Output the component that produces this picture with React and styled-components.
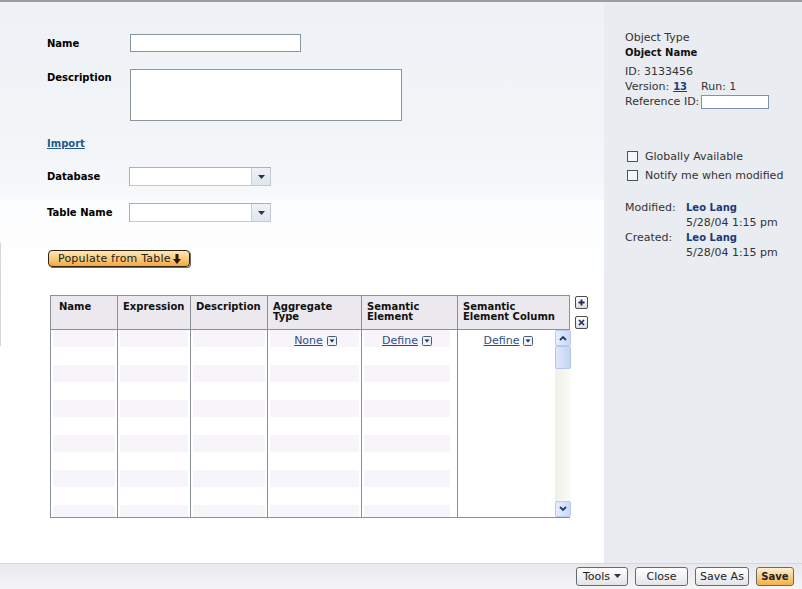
import React from 'react';
import styled, { createGlobalStyle } from 'styled-components';

const Global = createGlobalStyle`
  html, body { margin: 0; padding: 0; }
  body {
    font-family: "DejaVu Sans", Verdana, sans-serif;
    font-size: 11px;
    color: #000;
    background: #fff;
  }
  * { box-sizing: border-box; }
`;

const Page = styled.div`
  position: relative;
  width: 802px;
  height: 589px;
  display: flex;
  flex-direction: column;
  overflow: hidden;
  border-top: 2px solid #9a9ea4;
`;

const Pointer = styled.div`
  position: absolute;
  left: 70px;
  top: -2px;
  width: 0;
  height: 0;
  border-left: 6px solid transparent;
  border-right: 6px solid transparent;
  border-top: 7px solid #f2c89c;
`;

const Body = styled.div`
  flex: 1;
  display: flex;
  min-height: 0;
`;

const Main = styled.div`
  position: relative;
  width: 604px;
  padding: 32px 0 0 47px;
  background: linear-gradient(#eef1f5 0px, #f2f5f8 130px, #f6f8fa 195px, #fcfdfe 200px, #ffffff 300px, #ffffff 100%);
  display: flex;
  flex-direction: column;
  align-items: flex-start;
  &::before {
    content: "";
    position: absolute;
    left: 0;
    top: 241px;
    width: 1px;
    height: 103px;
    background: #d4d6da;
  }
`;

const Sidebar = styled.div`
  flex: 1;
  background: #e9ecf0;
  padding: 28px 0 0 21px;
  color: #333;
`;

const FormRow = styled.div`
  display: flex;
  align-items: ${p => (p.$top ? 'flex-start' : 'center')};
  margin-top: ${p => p.$mt || 0}px;
`;

const Label = styled.div`
  width: ${p => p.$w || 83}px;
  font-size: 10px;
  font-weight: bold;
  padding-top: ${p => (p.$top ? 3 : 0)}px;
`;

const TextInput = styled.div`
  width: ${p => p.$w}px;
  height: ${p => p.$h}px;
  background: #fff;
  border: 1px solid #8c949c;
`;

const SelectBox = styled.div`
  display: flex;
  width: 142px;
  height: 19px;
  border: 1px solid #c3c9d0;
  border-top-color: #a8b0b8;
  border-left-color: #a8b0b8;
  background: #fff;
`;

const SelectField = styled.div`
  flex: 1;
`;

const SelectButton = styled.div`
  width: 19px;
  border-left: 1px solid #c8d0d8;
  background: linear-gradient(#eef2f7, #dfe6ee);
  display: flex;
  align-items: center;
  justify-content: center;
`;

const LinkBold = styled.a`
  color: #1d5a8c;
  font-size: 10px;
  font-weight: bold;
  text-decoration: underline;
  line-height: 12px;
  margin-top: ${p => p.$mt || 0}px;
`;

const PopulateButton = styled.button`
  margin: 28px 0 0 1px;
  width: 142px;
  height: 17px;
  padding: 0 0 0 9px;
  display: flex;
  align-items: center;
  gap: 2px;
  font-family: inherit;
  font-size: 11px;
  letter-spacing: 0.2px;
  color: #222;
  border: 1px solid #2e2410;
  border-radius: 4px;
  background: linear-gradient(#fde8b8, #f9c878 55%, #f2a744);
  box-shadow: 1px 1px 0 #6b6b6b;
`;

const TableArea = styled.div`
  margin: 28px 0 0 3px;
  display: flex;
  gap: 5px;
  align-items: flex-start;
`;

const Frame = styled.div`
  width: 520px;
  height: 223px;
  border: 1px solid #8a9098;
  display: flex;
  flex-direction: column;
  background: #fff;
`;

const Grid = styled.div`
  display: grid;
  grid-template-columns: 66px 73px 77px 94px 96px 1fr;
  height: ${p => p.$h}px;
  flex: ${p => (p.$grow ? 1 : 'none')};
  min-height: 0;
`;

const HeadCell = styled.div`
  background: #ebe9ee;
  border-left: ${p => (p.$first ? 'none' : '1px solid #8a9098')};
  border-bottom: 1px solid #8a9098;
  padding: 6px 0 0 ${p => (p.$first ? 8 : 5)}px;
  font-size: 10px;
  font-weight: bold;
  line-height: 10px;
  color: #111;
`;

const BodyCell = styled.div`
  border-left: ${p => (p.$first ? 'none' : '1px solid #8a9098')};
  padding: 0 ${p => p.$pr ?? 2}px 0 2px;
  background-image: ${p => (p.$plain ? 'none' : 'repeating-linear-gradient(to bottom, #f7f5f9 0px, #f7f5f9 17px, #ffffff 17px, #ffffff 35px)')};
  background-clip: content-box;
  display: flex;
  min-height: 0;
`;

const CellInner = styled.div`
  flex: 1;
`;

const FirstRow = styled.div`
  height: 21px;
  display: flex;
  align-items: center;
  justify-content: center;
  gap: 4px;
  padding-left: ${p => p.$pl || 0}px;
`;

const DropLink = styled.a`
  color: #2f4f86;
  text-decoration: underline;
`;

const Scrollbar = styled.div`
  width: 16px;
  margin-right: -2px;
  display: flex;
  flex-direction: column;
  background: linear-gradient(to right, #f0efe8, #fbfbf8);
`;

const ScrollBtn = styled.div`
  height: 16px;
  border: 1px solid #bccbe8;
  border-radius: 2px;
  background: linear-gradient(to right, #e6eefc, #c9d8f4);
  display: flex;
  align-items: center;
  justify-content: center;
`;

const Thumb = styled.div`
  height: 23px;
  border: 1px solid #b4c6ea;
  border-radius: 2px;
  background: linear-gradient(to right, #dfe8fb, #c4d4f3);
`;

const Track = styled.div`
  flex: 1;
`;

const SideButtons = styled.div`
  display: flex;
  flex-direction: column;
  gap: 7px;
  padding-top: 1px;
`;

const SmallBtn = styled.div`
  width: 13px;
  height: 13px;
  border: 1px solid #4c4c4c;
  border-radius: 2px;
  background: linear-gradient(#ffffff, #dcdce2);
  display: flex;
  align-items: center;
  justify-content: center;
`;

const Line = styled.div`
  height: ${p => p.$h || 15}px;
  line-height: ${p => p.$h || 15}px;
  margin-top: ${p => p.$mt || 0}px;
  font-size: ${p => (p.$bold ? 10 : 11)}px;
  font-weight: ${p => (p.$bold ? 'bold' : 'normal')};
  color: ${p => (p.$bold ? '#111' : '#333')};
  display: flex;
  align-items: center;
  white-space: nowrap;
`;

const VersionLink = styled.a`
  color: #1a3f7e;
  font-size: 10px;
  font-weight: bold;
  text-decoration: underline;
  margin: 0 14px 0 4px;
`;

const RefInput = styled.div`
  width: 68px;
  height: 14px;
  margin-left: 2px;
  background: #fff;
  border: 1px solid #7f93ab;
`;

const CheckRow = styled.div`
  height: 19px;
  margin-top: ${p => p.$mt || 0}px;
  display: flex;
  align-items: center;
  gap: 7px;
  padding-left: 2px;
`;

const Check = styled.div`
  width: 11px;
  height: 11px;
  border: 1px solid #44546a;
  background: #f6f7f9;
`;

const MetaGrid = styled.div`
  margin-top: 15px;
  display: grid;
  grid-template-columns: 61px auto;
  grid-auto-rows: 15px;
  line-height: 15px;
`;

const Person = styled.span`
  color: #1c3a78;
  font-size: 10px;
  font-weight: bold;
`;

const Footer = styled.div`
  height: 26px;
  border-top: 1px solid #d6d6dc;
  background: linear-gradient(#e8e8ec, #f5f5f7);
  display: flex;
  align-items: center;
  justify-content: flex-end;
  gap: 7px;
  padding: 0 8px 1px 0;
`;

const FootButton = styled.button`
  width: ${p => p.$w}px;
  height: 19px;
  padding: 0;
  font-family: inherit;
  font-size: ${p => (p.$primary ? 10 : 11)}px;
  font-weight: ${p => (p.$primary ? 'bold' : 'normal')};
  color: #222;
  border: 1px solid #666a70;
  border-radius: 3px;
  background: ${p => (p.$primary ? 'linear-gradient(#fff0d0, #f8c878 60%, #f3b050)' : 'linear-gradient(#ffffff, #e4e4e8)')};
  display: flex;
  align-items: center;
  justify-content: center;
  gap: 4px;
`;

const Caret = ({ color = '#333' }) => (
  <svg width="7" height="4" viewBox="0 0 7 4"><path d="M0 0 H7 L3.5 4 Z" fill={color} /></svg>
);

const DropIcon = () => (
  <svg width="10" height="10" viewBox="0 0 10 10">
    <rect x="0.5" y="0.5" width="9" height="9" rx="1" fill="#eef2f8" stroke="#4a5c78" />
    <path d="M2.5 3.5 H7.5 L5 6.5 Z" fill="#1f2f4f" />
  </svg>
);

const Chevron = ({ up }) => (
  <svg width="8" height="6" viewBox="0 0 8 6">
    <path d={up ? 'M1 5 L4 2 L7 5' : 'M1 1 L4 4 L7 1'} fill="none" stroke="#243a70" strokeWidth="1.8" />
  </svg>
);

const DownArrow = () => (
  <svg width="8" height="10" viewBox="0 0 8 10">
    <path d="M2.5 0 H5.5 V5 H8 L4 10 L0 5 H2.5 Z" fill="#2a1a05" />
  </svg>
);

function Select() {
  return (
    <SelectBox>
      <SelectField />
      <SelectButton><Caret color="#2a3445" /></SelectButton>
    </SelectBox>
  );
}

export default function App() {
  return (
    <>
      <Global />
      <Page>
        <Pointer />
        <Body>
          <Main>
            <FormRow>
              <Label>Name</Label>
              <TextInput $w={171} $h={18} />
            </FormRow>
            <FormRow $top $mt={17}>
              <Label $top>Description</Label>
              <TextInput $w={272} $h={52} />
            </FormRow>
            <LinkBold $mt={17}>Import</LinkBold>
            <FormRow $mt={17}>
              <Label $w={82}>Database</Label>
              <Select />
            </FormRow>
            <FormRow $mt={17}>
              <Label $w={82}>Table Name</Label>
              <Select />
            </FormRow>
            <PopulateButton>Populate from Table<DownArrow /></PopulateButton>
            <TableArea>
              <Frame>
                <Grid $h={34}>
                  <HeadCell $first>Name</HeadCell>
                  <HeadCell>Expression</HeadCell>
                  <HeadCell>Description</HeadCell>
                  <HeadCell>Aggregate<br />Type</HeadCell>
                  <HeadCell>Semantic<br />Element</HeadCell>
                  <HeadCell>Semantic<br />Element Column</HeadCell>
                </Grid>
                <Grid $grow>
                  <BodyCell $first />
                  <BodyCell />
                  <BodyCell />
                  <BodyCell>
                    <CellInner>
                      <FirstRow $pl={2}><DropLink>None</DropLink><DropIcon /></FirstRow>
                    </CellInner>
                  </BodyCell>
                  <BodyCell $pr={7}>
                    <CellInner>
                      <FirstRow><DropLink>Define</DropLink><DropIcon /></FirstRow>
                    </CellInner>
                  </BodyCell>
                  <BodyCell $plain $pr={0}>
                    <CellInner>
                      <FirstRow $pl={2}><DropLink>Define</DropLink><DropIcon /></FirstRow>
                    </CellInner>
                    <Scrollbar>
                      <ScrollBtn><Chevron up /></ScrollBtn>
                      <Thumb />
                      <Track />
                      <ScrollBtn><Chevron /></ScrollBtn>
                    </Scrollbar>
                  </BodyCell>
                </Grid>
              </Frame>
              <SideButtons>
                <SmallBtn>
                  <svg width="7" height="7" viewBox="0 0 7 7"><path d="M3.5 0.5 V6.5 M0.5 3.5 H6.5" stroke="#1a2a55" strokeWidth="1.8" /></svg>
                </SmallBtn>
                <SmallBtn>
                  <svg width="7" height="7" viewBox="0 0 7 7"><path d="M1 1 L6 6 M6 1 L1 6" stroke="#1a2a55" strokeWidth="1.6" /></svg>
                </SmallBtn>
              </SideButtons>
            </TableArea>
          </Main>
          <Sidebar>
            <Line>Object Type</Line>
            <Line $bold>Object Name</Line>
            <Line $mt={4}>ID: 3133456</Line>
            <Line>Version:<VersionLink>13</VersionLink>Run: 1</Line>
            <Line>Reference ID:<RefInput /></Line>
            <CheckRow $mt={38}><Check />Globally Available</CheckRow>
            <CheckRow><Check />Notify me when modified</CheckRow>
            <MetaGrid>
              <span>Modified:</span><Person>Leo Lang</Person>
              <span />
              <span>5/28/04 1:15 pm</span>
              <span>Created:</span><Person>Leo Lang</Person>
              <span />
              <span>5/28/04 1:15 pm</span>
            </MetaGrid>
          </Sidebar>
        </Body>
        <Footer>
          <FootButton $w={52}>Tools<Caret /></FootButton>
          <FootButton $w={53}>Close</FootButton>
          <FootButton $w={54}>Save As</FootButton>
          <FootButton $w={38} $primary>Save</FootButton>
        </Footer>
      </Page>
    </>
  );
}
